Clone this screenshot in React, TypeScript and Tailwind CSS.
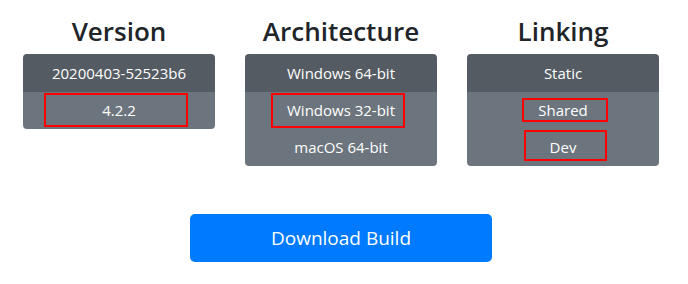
import React from "react";

type Row = { label: string; box?: { left: number; top: number; width: number; height: number } };

const columns: { title: string; header: string; rows: Row[] }[] = [
  {
    title: "Version",
    header: "20200403-52523b6",
    rows: [{ label: "4.2.2", box: { left: 21, top: 1, width: 144, height: 34 } }],
  },
  {
    title: "Architecture",
    header: "Windows 64-bit",
    rows: [
      { label: "Windows 32-bit", box: { left: 26, top: 1, width: 134, height: 35 } },
      { label: "macOS 64-bit" },
    ],
  },
  {
    title: "Linking",
    header: "Static",
    rows: [
      { label: "Shared", box: { left: 55, top: 6, width: 86, height: 24 } },
      { label: "Dev", box: { left: 57, top: 1, width: 83, height: 31 } },
    ],
  },
];

export default function App() {
  return (
    <div
      className="w-[688px] h-[284px] bg-white overflow-hidden"
      style={{ fontFamily: '"Open Sans", "Noto Sans", sans-serif' }}
    >
      <div className="w-[666px] ml-[8px]">
        <div className="flex">
          {columns.map((col) => (
            <div key={col.title} className="w-[222px] px-[15px] pt-[16px]">
              <h4 className="text-[26px] leading-[30px] font-semibold text-[#212529] text-center mb-[8px]">
                {col.title}
              </h4>
              <div className="rounded-[4px] overflow-hidden text-white text-[15px]">
                <div className="h-[38px] bg-[#545b62] flex items-center justify-center">
                  {col.header}
                </div>
                {col.rows.map((r) => (
                  <div
                    key={r.label}
                    className="relative h-[37px] bg-[#6c757d] flex items-center justify-center"
                  >
                    {r.label}
                    {r.box && (
                      <div
                        className="absolute border-2 border-[#ff0000]"
                        style={{
                          left: r.box.left,
                          top: r.box.top,
                          width: r.box.width,
                          height: r.box.height,
                        }}
                      />
                    )}
                  </div>
                ))}
              </div>
            </div>
          ))}
        </div>
        <div className="flex justify-center mt-[48px]">
          <button className="w-[302px] h-[48px] bg-[#007bff] rounded-[5px] text-white text-[19px] flex items-center justify-center">
            Download Build
          </button>
        </div>
      </div>
    </div>
  );
}
